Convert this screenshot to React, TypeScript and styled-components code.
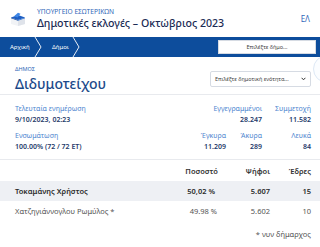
import React, { ReactElement } from 'react';
import styled, { createGlobalStyle } from 'styled-components';

const GlobalStyle = createGlobalStyle`
    html, body {
        margin: 0;
        padding: 0;
        background: #ffffff;
        font-family: 'Noto Sans', 'Open Sans', sans-serif;
        overflow: hidden;
    }
`;

const Page = styled.div`
    width: 320px;
    height: 247px;
    position: relative;
    overflow: hidden;
`;

const Header = styled.header`
    height: 37px;
    display: flex;
    align-items: center;
    padding: 0 8px 0 10px;
`;

const TitleBlock = styled.div`
    display: flex;
    flex-direction: column;
    margin-left: 11px;
    flex: 1;
`;

const Ministry = styled.span`
    font-size: 6.6px;
    color: #2f66b8;
    line-height: 8px;
`;

const SiteTitle = styled.span`
    font-size: 10.6px;
    color: #1c2c55;
    line-height: 14px;
    font-weight: 500;
`;

const Lang = styled.span`
    font-size: 8px;
    color: #2f66b8;
    margin-right: 2px;
`;

const NavBar = styled.nav`
    height: 20px;
    background: #0d4d9c;
    display: flex;
    align-items: center;
    padding-right: 4px;
`;

const Crumb = styled.span<{ $width: number }>`
    width: ${(p) => p.$width}px;
    display: flex;
    align-items: center;
    height: 100%;
    color: #ffffff;
    font-size: 6px;
    padding-left: 10px;
    box-sizing: border-box;
    position: relative;
`;

const Chevron = styled.svg`
    position: absolute;
    right: 0;
    top: 0;
`;

const NavSearch = styled.div`
    margin-left: auto;
    width: 98px;
    height: 14px;
    background: #ffffff;
    border: 1px solid #d6dbe3;
    box-sizing: border-box;
    display: flex;
    align-items: center;
    justify-content: center;
    font-size: 5.5px;
    color: #444;
`;

const Main = styled.main`
    padding: 0 9px 0 15px;
`;

const Band = styled.div`
    margin: 0 -9px 0 -15px;
    padding: 0 9px 0 15px;
    border-bottom: 1px solid #e8eaee;
`;

const TitleRow = styled(Band)`
    display: flex;
    justify-content: space-between;
    align-items: flex-start;
    padding-top: 9px;
    height: 38px;
    box-sizing: border-box;
`;

const Kicker = styled.div`
    font-size: 5.5px;
    color: #2f66b8;
    line-height: 7px;
    margin-bottom: 2px;
    text-transform: uppercase;
`;

const Municipality = styled.h1`
    margin: 0;
    font-size: 14px;
    font-weight: 500;
    line-height: 18px;
    color: #1c4a8a;
`;

const Select = styled.div`
    margin-top: 5px;
    width: 101px;
    height: 16px;
    border: 1px solid #d6dbe3;
    border-radius: 2px;
    box-sizing: border-box;
    display: flex;
    align-items: center;
    justify-content: space-between;
    padding: 0 4px;
    font-size: 5.5px;
    color: #444;
`;

const Stats = styled(Band)`
    display: grid;
    grid-template-columns: 1fr 52px 36px 49px;
    row-gap: 5px;
    padding-top: 9px;
    padding-bottom: 6px;
`;

const Stat = styled.div<{ $align?: 'left' | 'right'; $span?: number }>`
    display: flex;
    flex-direction: column;
    align-items: ${(p) => (p.$align === 'right' ? 'flex-end' : 'flex-start')};
    grid-column: span ${(p) => p.$span ?? 1};
`;

const StatLabel = styled.span`
    font-size: 7px;
    line-height: 10px;
    color: #4f86cf;
`;

const StatValue = styled.span`
    font-size: 7px;
    line-height: 12px;
    font-weight: 600;
    color: #1f3b6b;
`;

const Table = styled.table`
    width: calc(100% + 24px);
    margin: 0 -9px 0 -15px;
    border-collapse: collapse;
    font-size: 7.5px;
`;

const Th = styled.th<{ $width?: number }>`
    text-align: right;
    font-weight: 600;
    color: #333333;
    height: 21px;
    padding: 0;
    width: ${(p) => (p.$width ? `${p.$width}px` : 'auto')};
    &:last-child {
        padding-right: 9px;
    }
`;

const Row = styled.tr<{ $lead?: boolean }>`
    height: 20px;
    background: ${(p) => (p.$lead ? '#eef0f4' : '#ffffff')};
    color: ${(p) => (p.$lead ? '#2b2b2b' : '#555555')};
    font-weight: ${(p) => (p.$lead ? 600 : 400)};
`;

const Td = styled.td<{ $left?: boolean; $nudge?: number }>`
    text-align: ${(p) => (p.$left ? 'left' : 'right')};
    padding: 0 ${(p) => p.$nudge ?? 0}px 0 ${(p) => (p.$left ? 15 : 0)}px;
    &:last-child {
        padding-right: 9px;
    }
`;

const Footnote = styled.div`
    text-align: right;
    font-size: 7.5px;
    color: #555555;
    padding-top: 8px;
`;

const ScrollBubble = styled.div`
    position: absolute;
    top: 55px;
    left: 313px;
    width: 26px;
    height: 26px;
    border-radius: 50%;
    border: 1px solid #dde8f5;
    background: #fbfdff;
`;

const Logo = (): ReactElement => (
    <svg width="16" height="14" viewBox="0 0 16 14">
        <path d="M1 6 L8 8.5 L15 6 L15 12 L8 14 L1 12 Z" fill="#f1f3f6" />
        <path d="M8 8.5 L15 6 L15 12 L8 14 Z" fill="#dfe3ea" />
        <path d="M1 5.5 L8 3 L15 5.5 L8 8 Z" fill="#1d5fc4" />
        <path d="M4 4.3 L8 0.8 L10.5 1.8 L7.5 5.4 Z" fill="#3d86e6" />
        <path d="M1 5.5 L8 8 L8 8.8 L1 6.3 Z" fill="#16489a" />
        <path d="M8 8 L15 5.5 L15 6.3 L8 8.8 Z" fill="#2a6ccc" />
    </svg>
);

const CrumbArrow = (): ReactElement => (
    <Chevron width="8" height="20" viewBox="0 0 8 20">
        <path d="M1 0 L7 10 L1 20" fill="none" stroke="#ffffff" strokeWidth="0.9" />
    </Chevron>
);

const App = (): ReactElement => (
    <Page>
        <GlobalStyle />
        <Header>
            <Logo />
            <TitleBlock>
                <Ministry>ΥΠΟΥΡΓΕΙΟ ΕΣΩΤΕΡΙΚΩΝ</Ministry>
                <SiteTitle>Δημοτικές εκλογές – Οκτώβριος 2023</SiteTitle>
            </TitleBlock>
            <Lang>ΕΛ</Lang>
        </Header>
        <NavBar>
            <Crumb $width={42}>
                Αρχική
                <CrumbArrow />
            </Crumb>
            <Crumb $width={38}>
                Δήμοι
                <CrumbArrow />
            </Crumb>
            <NavSearch>Επιλέξτε δήμο...</NavSearch>
        </NavBar>
        <Main>
            <TitleRow>
                <div>
                    <Kicker>Δημος</Kicker>
                    <Municipality>Διδυμοτείχου</Municipality>
                </div>
                <Select>
                    <span>Επιλέξτε δημοτική ενότητα...</span>
                    <svg width="5" height="4" viewBox="0 0 5 4">
                        <path d="M0.6 0.8 L2.5 2.8 L4.4 0.8" fill="none" stroke="#333" strokeWidth="1" />
                    </svg>
                </Select>
            </TitleRow>
            <Stats>
                <Stat>
                    <StatLabel>Τελευταία ενημέρωση</StatLabel>
                    <StatValue>9/10/2023, 02:23</StatValue>
                </Stat>
                <Stat $align="right" $span={2}>
                    <StatLabel>Εγγεγραμμένοι</StatLabel>
                    <StatValue>28.247</StatValue>
                </Stat>
                <Stat $align="right">
                    <StatLabel>Συμμετοχή</StatLabel>
                    <StatValue>11.582</StatValue>
                </Stat>
                <Stat>
                    <StatLabel>Ενσωμάτωση</StatLabel>
                    <StatValue>100.00% (72 / 72 ΕΤ)</StatValue>
                </Stat>
                <Stat $align="right">
                    <StatLabel>Έγκυρα</StatLabel>
                    <StatValue>11.209</StatValue>
                </Stat>
                <Stat $align="right">
                    <StatLabel>Άκυρα</StatLabel>
                    <StatValue>289</StatValue>
                </Stat>
                <Stat $align="right">
                    <StatLabel>Λευκά</StatLabel>
                    <StatValue>84</StatValue>
                </Stat>
            </Stats>
            <Table>
                <thead>
                    <tr>
                        <Th />
                        <Th $width={40}>Ποσοστό</Th>
                        <Th $width={52}>Ψήφοι</Th>
                        <Th $width={41}>Έδρες</Th>
                    </tr>
                </thead>
                <tbody>
                    <Row $lead>
                        <Td $left>Τοκαμάνης Χρήστος</Td>
                        <Td $nudge={3}>50,02 %</Td>
                        <Td>5.607</Td>
                        <Td>15</Td>
                    </Row>
                    <Row>
                        <Td $left>Χατζηγιάννογλου Ρωμύλος *</Td>
                        <Td $nudge={1}>49.98 %</Td>
                        <Td>5.602</Td>
                        <Td>10</Td>
                    </Row>
                </tbody>
            </Table>
            <Footnote>* νυν δήμαρχος</Footnote>
        </Main>
        <ScrollBubble />
    </Page>
);

export default App;
